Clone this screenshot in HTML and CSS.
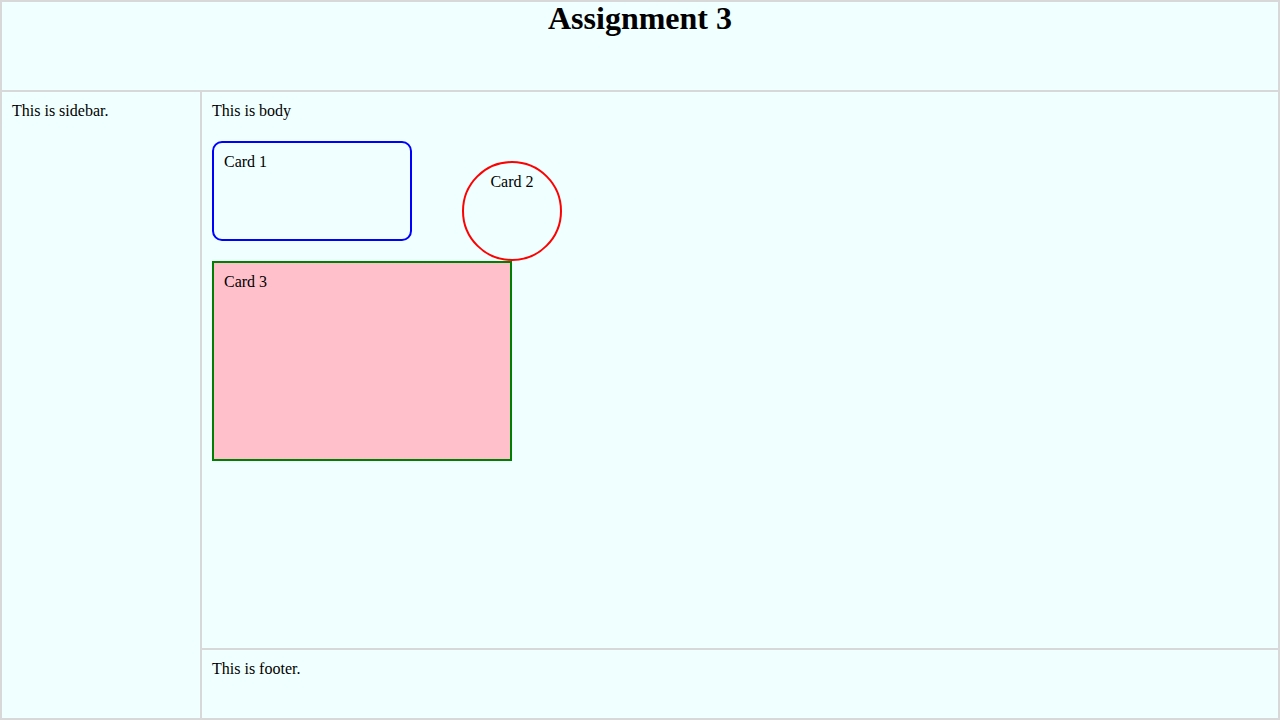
FILE: index.html
```html
<!DOCTYPE html>
<html>
<head>
<meta charset="utf-8">
<title>Assignment 3</title>
<link rel="stylesheet" href="styles.css">
</head>
<body>
<div class="page">
  <header class="header"><h1 class="title">Assignment 3</h1></header>
  <aside class="sidebar">This is sidebar.</aside>
  <main class="content">
    <div class="intro">This is body</div>
    <div class="card-row">
      <div class="card card-1">Card 1</div>
      <div class="card card-2">Card 2</div>
    </div>
    <div class="card card-3">Card 3</div>
  </main>
  <footer class="footer">This is footer.</footer>
</div>
</body>
</html>
```
FILE: styles.css
```css
html, body {
  margin: 0;
  padding: 0;
}
body {
  font-family: "Liberation Serif", "Times New Roman", serif;
  font-size: 16px;
  color: #000;
}
.page {
  box-sizing: border-box;
  width: 1280px;
  height: 720px;
  padding: 2px;
  background: #d8d8d8;
  display: grid;
  grid-template-columns: 198px 1fr;
  grid-template-rows: 88px 1fr 68px;
  gap: 2px;
}
.header {
  grid-column: 1 / 3;
  background: #f0ffff;
}
.title {
  margin: 0;
  font-size: 32px;
  line-height: 32px;
  font-weight: bold;
  text-align: center;
}
.sidebar {
  grid-row: 2 / 4;
  background: #f0ffff;
  padding: 10px;
}
.content {
  background: #f0ffff;
  padding: 10px;
}
.footer {
  background: #f0ffff;
  padding: 10px;
}
.card-row {
  display: flex;
  align-items: flex-start;
  margin-top: 21px;
}
.card {
  box-sizing: border-box;
  padding: 10px;
}
.card-1 {
  width: 200px;
  height: 100px;
  border: 2px solid #0000ff;
  border-radius: 10px;
}
.card-2 {
  width: 100px;
  height: 100px;
  margin-left: 50px;
  margin-top: 20px;
  border: 2px solid #ff0000;
  border-radius: 50%;
  text-align: center;
}
.card-3 {
  width: 300px;
  height: 200px;
  border: 2px solid #008000;
  background: #ffc0cb;
}
```
